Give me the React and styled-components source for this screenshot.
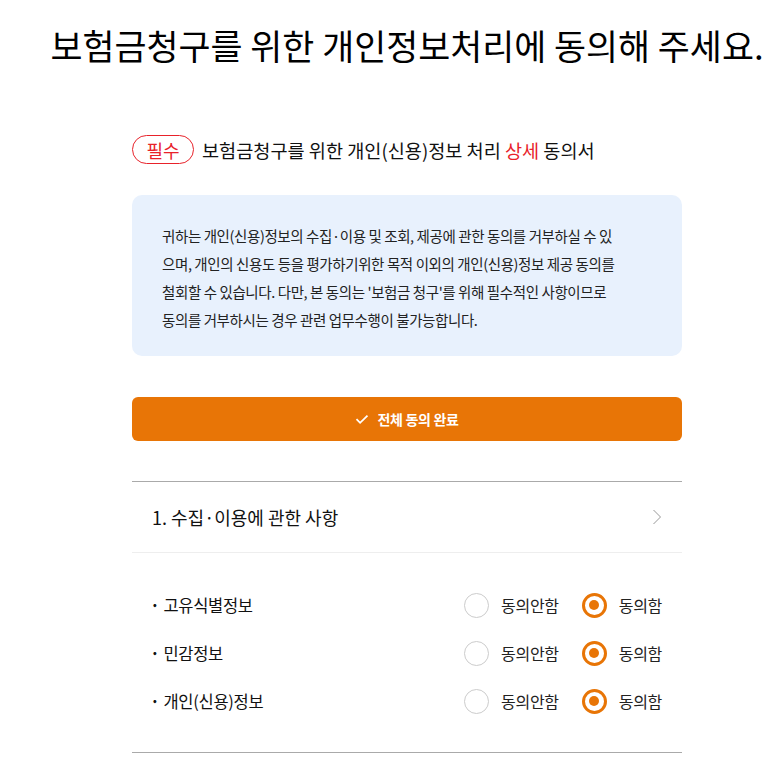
import React, { useState } from 'react';
import styled, { createGlobalStyle } from 'styled-components';

const GlobalStyle = createGlobalStyle`
  body {
    margin: 0;
    background: #ffffff;
    font-family: "Noto Sans CJK KR", "Noto Sans", sans-serif;
    color: #111;
  }
`;

const ORANGE = '#e87506';

const Page = styled.div`
  width: 550px;
  margin-left: 132px;
  padding-top: 21px;
  padding-bottom: 40px;
`;

const Title = styled.h1`
  display: flex;
  justify-content: center;
  margin: 0;
  height: 48px;
  font-size: 34.8px;
  font-weight: 400;
  line-height: 48px;
  letter-spacing: 0;
  white-space: nowrap;
  color: #000;
`;

const Heading = styled.div`
  display: flex;
  align-items: center;
  gap: 8px;
  margin-top: 66px;
  font-size: 18.6px;
  letter-spacing: 0;
  color: #111;
`;

const Badge = styled.span`
  display: inline-flex;
  align-items: center;
  justify-content: center;
  width: 62px;
  height: 29px;
  box-sizing: border-box;
  border: 1px solid #e8222a;
  border-radius: 15px;
  color: #e8222a;
  font-size: 18px;
`;

const Red = styled.span`
  color: #e8222a;
`;

const InfoBox = styled.div`
  margin-top: 31px;
  padding: 27px 63px 22px 30px;
  background: #e8f1fd;
  border-radius: 10px;
  font-size: 14.5px;
  line-height: 28px;
  letter-spacing: -0.4px;
  color: #222;
`;

const AgreeAll = styled.button`
  display: flex;
  align-items: center;
  justify-content: center;
  gap: 8px;
  width: 100%;
  height: 44px;
  margin-top: 41px;
  border: none;
  border-radius: 6px;
  background: ${ORANGE};
  color: #fff;
  font-family: inherit;
  font-size: 14px;
  font-weight: 700;
  letter-spacing: -0.3px;
  cursor: pointer;
`;

const Section = styled.div`
  margin-top: 40px;
  border-top: 1px solid #aaa;
  border-bottom: 1px solid #aaa;
`;

const SectionHead = styled.div`
  display: flex;
  align-items: center;
  justify-content: space-between;
  height: 70px;
  padding: 0 20px;
  border-bottom: 1px solid #eee;
  font-size: 18px;
  color: #111;
`;

const Items = styled.div`
  display: flex;
  flex-direction: column;
  padding: 28px 20px 27px 18px;
`;

const ItemRow = styled.div`
  display: flex;
  align-items: center;
  justify-content: space-between;
  height: 48px;
  font-size: 16.5px;
  letter-spacing: -0.3px;
`;

const ItemLabel = styled.div`
  display: flex;
  align-items: center;
  gap: 4px;
  &::before {
    content: '·';
    font-weight: 700;
  }
`;

const Choices = styled.div`
  display: flex;
  align-items: center;
  gap: 23px;
`;

const Choice = styled.label`
  display: flex;
  align-items: center;
  gap: 12px;
  font-size: 16px;
  letter-spacing: -0.3px;
  color: #222;
  cursor: pointer;
`;

const Radio = styled.span`
  position: relative;
  width: 25px;
  height: 25px;
  box-sizing: border-box;
  border-radius: 50%;
  border: ${(p) => (p.checked ? `3px solid ${ORANGE}` : '1px solid #ccc')};
  background: #fff;
  &::after {
    content: '';
    display: ${(p) => (p.checked ? 'block' : 'none')};
    position: absolute;
    left: 50%;
    top: 50%;
    width: 10px;
    height: 10px;
    margin: -5px 0 0 -5px;
    border-radius: 50%;
    background: ${ORANGE};
  }
`;

const items = ['고유식별정보', '민감정보', '개인(신용)정보'];

export default function App() {
  const [values, setValues] = useState(items.map(() => true));

  const set = (i, v) => setValues((prev) => prev.map((x, j) => (j === i ? v : x)));

  return (
    <>
      <GlobalStyle />
      <Page>
        <Title>보험금청구를 위한 개인정보처리에 동의해 주세요.</Title>

        <Heading>
          <Badge>필수</Badge>
          <span>
            보험금청구를 위한 개인(신용)정보 처리 <Red>상세</Red> 동의서
          </span>
        </Heading>

        <InfoBox>
          귀하는 개인(신용)정보의 수집·이용 및 조회, 제공에 관한 동의를 거부하실 수 있으며, 개인의 신용도 등을 평가하기위한 목적 이외의 개인(신용)정보 제공 동의를 철회할 수 있습니다. 다만, 본 동의는 '보험금 청구'를 위해 필수적인 사항이므로 동의를 거부하시는 경우 관련 업무수행이 불가능합니다.
        </InfoBox>

        <AgreeAll onClick={() => setValues(items.map(() => true))}>
          <svg width="14" height="14" viewBox="0 0 14 14" fill="none">
            <path d="M1.5 7.2l3.6 3.6L12.5 3.6" stroke="#fff" strokeWidth="1.8" />
          </svg>
          전체 동의 완료
        </AgreeAll>

        <Section>
          <SectionHead>
            <span>1. 수집·이용에 관한 사항</span>
            <svg width="10" height="16" viewBox="0 0 10 16" fill="none">
              <path d="M1.5 1l7 7-7 7" stroke="#999" strokeWidth="1" />
            </svg>
          </SectionHead>
          <Items>
            {items.map((name, i) => (
              <ItemRow key={name}>
                <ItemLabel>{name}</ItemLabel>
                <Choices>
                  <Choice onClick={() => set(i, false)}>
                    <Radio checked={!values[i]} />
                    동의안함
                  </Choice>
                  <Choice onClick={() => set(i, true)}>
                    <Radio checked={values[i]} />
                    동의함
                  </Choice>
                </Choices>
              </ItemRow>
            ))}
          </Items>
        </Section>
      </Page>
    </>
  );
}
